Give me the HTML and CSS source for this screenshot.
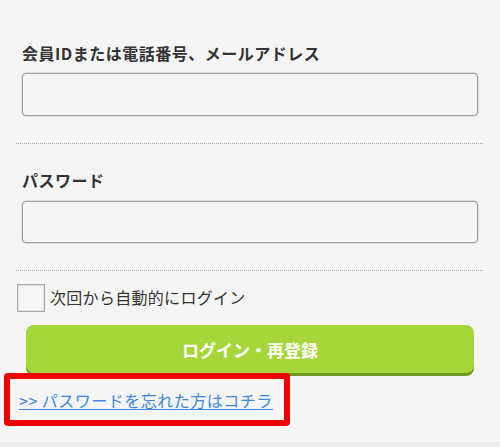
FILE: index.html
```html
<!DOCTYPE html>
<html lang="ja">
<head>
<meta charset="utf-8">
<link rel="stylesheet" href="styles.css">
</head>
<body>
<form class="login">
  <div class="field">
    <label class="field-label">会員IDまたは電話番号、メールアドレス</label>
    <input class="field-input" type="text">
  </div>
  <hr class="divider">
  <div class="field field-second">
    <label class="field-label">パスワード</label>
    <input class="field-input" type="password">
  </div>
  <hr class="divider">
  <label class="remember">
    <span class="checkbox"></span>
    <span class="remember-text">次回から自動的にログイン</span>
  </label>
  <button class="submit" type="button">ログイン・再登録</button>
  <div class="forgot">
    <a class="forgot-link" href="#">&gt;&gt; パスワードを忘れた方はコチラ</a>
    <span class="highlight"></span>
  </div>
</form>
<div class="footer-band"></div>
</body>
</html>
```

FILE: styles.css
```css
* { box-sizing: border-box; }
html, body {
  margin: 0;
  padding: 0;
  background: #f5f5f5;
  font-family: "Noto Sans CJK JP", "Noto Sans", sans-serif;
  color: #333;
}
.login {
  padding-top: 42px;
  height: 442px;
}
.field {
  padding: 0 22px;
}
.field-label {
  display: block;
  font-size: 16px;
  font-weight: bold;
  line-height: 22px;
  letter-spacing: 0.5px;
  color: #333;
}
.field-input {
  display: block;
  width: 100%;
  height: 43px;
  margin-top: 9px;
  border: 1px solid #9e9e9e;
  border-radius: 4px;
  background: #f5f5f5;
  box-shadow: 0 0 0 0.5px #c8c8c8;
}
.field-second .field-input {
  margin-top: 10px;
  height: 42px;
}
.divider {
  margin: 27px 17px 25px 16px;
  border: 0;
  border-top: 1px dotted #a8a8a8;
  height: 0;
}
.remember {
  display: flex;
  align-items: center;
  gap: 5px;
  margin: -12px 0 0 17px;
}
.checkbox {
  width: 28px;
  height: 28px;
  border: 1px solid #a8a8a8;
  background: #f7f7f7;
  box-shadow: inset 0 0 0 0.5px #c8c8c8;
}
.remember-text {
  font-size: 16px;
  line-height: 22px;
  letter-spacing: 0.3px;
  color: #333;
  margin-top: -3px;
}
.submit {
  display: block;
  width: 448px;
  height: 48px;
  margin: 13px 0 0 26px;
  border: 0;
  border-radius: 8px;
  background: #a7d63b;
  box-shadow: 0 3px 0 #6c9b1e;
  color: #fff;
  font-family: inherit;
  font-size: 17px;
  font-weight: bold;
  padding: 0;
}
.forgot {
  position: relative;
  margin: 15px 0 0 19px;
  height: 24px;
}
.forgot-link {
  font-size: 16px;
  line-height: 24px;
  letter-spacing: 0.5px;
  color: #3c88e0;
  text-decoration: underline;
  text-underline-offset: 2px;
}
.highlight {
  position: absolute;
  left: -15px;
  top: -15px;
  width: 286px;
  height: 53px;
  border: 6px solid #f20000;
  border-radius: 4px;
  pointer-events: none;
}
.footer-band {
  height: 5px;
  background: #ececec;
}
```
